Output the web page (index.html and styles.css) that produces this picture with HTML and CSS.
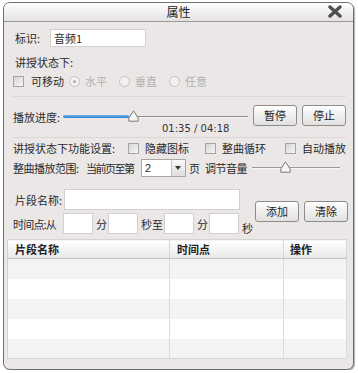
FILE: index.html
```html
<!DOCTYPE html>
<html lang="zh">
<head>
    <meta charset="UTF-8">
    <title>属性</title>
    <link rel="stylesheet" href="styles.css">
</head>
<body>
    <div class="win">
        <div class="title">属性
            <span class="close">
                <svg width="16" height="13" viewBox="0 0 16 13"><path d="M3 2 L13 11 M13 2 L3 11" stroke="#4f4f4f" stroke-width="3.4" stroke-linecap="round"/></svg>
            </span>
        </div>
        <div class="form">
            <div class="row r-id">
                <span class="lbl-id">标识:</span>
                <span class="input in-id">音频1</span>
            </div>
            <div class="row r-head">讲授状态下:</div>
            <div class="row r-move">
                <span class="cb"></span><span class="cb-txt">可移动</span>
                <span class="radio on"></span><span class="dim">水平</span>
                <span class="radio"></span><span class="dim">垂直</span>
                <span class="radio"></span><span class="dim">任意</span>
            </div>
            <div class="sep"></div>
            <div class="row r-play">
                <div class="play-left">
                    <div class="row play-line">
                        <span class="lbl-play">播放进度:</span>
                        <div class="slider">
                            <div class="track"></div>
                            <div class="fill"></div>
                            <svg class="thumb" width="11" height="12" viewBox="0 0 11 12"><path d="M5.5 0.8 L10.2 8 L10.2 11.2 L0.8 11.2 L0.8 8 Z" fill="#f4f4f4" stroke="#7a7a7a"/></svg>
                        </div>
                    </div>
                    <div class="time">01:35 / 04:18</div>
                </div>
                <span class="btn">暂停</span>
                <span class="btn">停止</span>
            </div>
            <div class="sep sep2"></div>
            <div class="row r-func">
                <span class="lbl-func">讲授状态下功能设置:</span>
                <span class="cb"></span><span class="cb-txt t1">隐藏图标</span>
                <span class="cb"></span><span class="cb-txt t2">整曲循环</span>
                <span class="cb"></span><span class="cb-txt">自动播放</span>
            </div>
            <div class="row r-range">
                <span class="lbl-range">整曲播放范围:</span>
                <span class="lbl-page">当前页至第</span>
                <span class="select"><span class="val">2</span><span class="arrow"></span></span>
                <span class="page">页</span>
                <span class="vol-lbl">调节音量</span>
                <div class="slider vol">
                    <div class="track"></div>
                    <svg class="thumb" width="11" height="12" viewBox="0 0 11 12"><path d="M5.5 0.8 L10.2 8 L10.2 11.2 L0.8 11.2 L0.8 8 Z" fill="#f4f4f4" stroke="#7a7a7a"/></svg>
                </div>
            </div>
            <div class="sep sep3"></div>
            <div class="row r-clip">
                <div class="clip-left">
                    <div class="row clip-name">
                        <span class="lbl-clip">片段名称:</span>
                        <span class="input in-name"></span>
                    </div>
                    <div class="row clip-time">
                        <span class="lbl-time">时间点:从</span>
                        <span class="input in-num"></span>
                        <span class="unit">分</span>
                        <span class="input in-num"></span>
                        <span class="unit">秒至</span>
                        <span class="input in-num"></span>
                        <span class="unit">分</span>
                        <span class="input in-num"></span>
                        <span class="unit low">秒</span>
                    </div>
                </div>
                <span class="btn">添加</span>
                <span class="btn">清除</span>
            </div>
        </div>
        <div class="grid-wrap">
            <table class="grid">
                <thead>
                    <tr><th class="c1">片段名称</th><th class="c2">时间点</th><th class="c3">操作</th></tr>
                </thead>
                <tbody>
                    <tr><td></td><td></td><td></td></tr>
                    <tr><td></td><td></td><td></td></tr>
                    <tr><td></td><td></td><td></td></tr>
                    <tr><td></td><td></td><td></td></tr>
                    <tr><td></td><td></td><td></td></tr>
                </tbody>
            </table>
        </div>
    </div>
</body>
</html>
```

FILE: styles.css
```css
* {
    margin: 0;
    padding: 0;
    box-sizing: border-box;
}
body {
    font-family: "Noto Sans CJK SC", "Liberation Sans", sans-serif;
    font-size: 11px;
    color: #2a2a2a;
    background: #fff;
}
.win {
    margin: 2px 0 0 3px;
    width: 351px;
    height: 368px;
    border: 1px solid #6f6f6f;
    border-radius: 7px;
    background: #ebe7e7;
    box-shadow: 1px 1px 1px #b4b0b0;
    overflow: hidden;
}
.title {
    position: relative;
    height: 19px;
    line-height: 18px;
    border-bottom: 1px solid #9c9898;
    background: linear-gradient(#ffffff, #e4e1e1);
    text-align: center;
    font-size: 12px;
    color: #222;
}
.close {
    position: absolute;
    right: 10px;
    top: 2px;
    width: 16px;
    height: 13px;
}
.close svg {
    display: block;
}
.form {
    padding: 0 7px 0 9px;
}
.row {
    display: flex;
    align-items: center;
}
.row > * {
    flex-shrink: 0;
    white-space: nowrap;
}
.input {
    display: block;
    background: #fff;
    border: 1px solid #d2cfcf;
    height: 21px;
}
.r-id {
    margin-top: 6px;
    height: 20px;
    padding-left: 2px;
}
.lbl-id {
    width: 35px;
}
.in-id {
    width: 96px;
    height: 18px;
    line-height: 17px;
    padding-left: 3px;
}
.r-head {
    margin-top: 4px;
    height: 20px;
    padding-left: 2px;
}
.r-move {
    height: 18px;
}
.cb {
    display: block;
    width: 11px;
    height: 11px;
    border: 1px solid #a3a3a3;
    background: linear-gradient(135deg, #d6d6d6, #f7f7f7);
}
.cb-txt {
    margin-left: 7px;
}
.radio {
    display: block;
    position: relative;
    width: 11px;
    height: 11px;
    margin-left: 5px;
    border: 1px solid #c4c2c2;
    border-radius: 50%;
    background: #f2f0f0;
}
.radio.on::after {
    content: "";
    position: absolute;
    left: 3px;
    top: 3px;
    width: 3px;
    height: 3px;
    border-radius: 50%;
    background: #b0aeae;
}
.dim {
    margin-left: 5px;
    margin-right: 7px;
    color: #b3b0b0;
}
.sep {
    height: 1px;
    margin: 6px 0 8px;
    background: #dbd7d7;
}
.r-play {
    height: 29px;
    align-items: flex-start;
}
.play-left {
    width: 235px;
}
.play-line {
    height: 24px;
}
.lbl-play {
    width: 50px;
}
.slider {
    position: relative;
    width: 185px;
    height: 14px;
}
.track {
    position: absolute;
    left: 0;
    right: 0;
    top: 6px;
    height: 2px;
    background: #8d8a8a;
    border-bottom: 1px solid #f6f6f6;
}
.fill {
    position: absolute;
    left: 0;
    top: 5px;
    width: 66px;
    height: 3px;
    border-radius: 2px;
    background: linear-gradient(#6fb6f0, #2b7fd0);
}
.thumb {
    position: absolute;
    left: 65px;
    top: 0;
}
.time {
    margin-top: -6px;
    padding-left: 149px;
    font-family: "DejaVu Sans", sans-serif;
    font-size: 10px;
    line-height: 12px;
    color: #333;
}
.btn {
    display: block;
    width: 44px;
    height: 21px;
    line-height: 19px;
    margin-left: 5px;
    text-align: center;
    border: 1px solid #8e8b8b;
    border-radius: 3px;
    background: linear-gradient(#fefefe, #e2e0e0);
    color: #222;
}
.sep2 {
    margin: 3px 0 2px;
}
.r-func {
    height: 16px;
}
.lbl-func {
    width: 115px;
}
.r-func .cb-txt {
    margin-left: 6px;
}
.r-func .t1 {
    width: 60px;
}
.r-func .t2 {
    width: 63px;
}
.r-range {
    height: 20px;
    margin-top: 2px;
}
.lbl-range {
    width: 73px;
    letter-spacing: -0.5px;
}
.lbl-page {
    width: 55px;
    letter-spacing: -1.5px;
}
.select {
    display: flex;
    width: 45px;
    height: 18px;
    border: 1px solid #a9a6a6;
    background: #fff;
}
.val {
    flex: 1;
    padding-left: 3px;
    line-height: 16px;
    font-family: "Liberation Sans", sans-serif;
}
.arrow {
    position: relative;
    width: 14px;
    border-left: 1px solid #c4c2c2;
    background: linear-gradient(#fafafa, #dedcdc);
}
.arrow::after {
    content: "";
    position: absolute;
    left: 3px;
    top: 6px;
    border-left: 3px solid transparent;
    border-right: 3px solid transparent;
    border-top: 4px solid #333;
}
.page {
    margin-left: 3px;
}
.vol-lbl {
    margin-left: 5px;
    letter-spacing: -0.5px;
}
.slider.vol {
    width: 88px;
    margin-left: 5px;
}
.vol .track {
    background: #9a9797;
}
.vol .thumb {
    left: 28px;
}
.sep3 {
    margin: 5px 0 5px;
    background: transparent;
}
.r-clip {
    height: 45px;
}
.clip-left {
    width: 237px;
}
.clip-name {
    height: 21px;
    padding-left: 2px;
}
.lbl-clip {
    width: 49px;
}
.in-name {
    width: 176px;
}
.clip-time {
    height: 21px;
    margin-top: 3px;
}
.lbl-time {
    width: 50px;
    letter-spacing: -0.8px;
}
.in-num {
    width: 30px;
}
.unit {
    margin: 0 1px 0 3px;
}
.low {
    margin-top: 8px;
}
.grid-wrap {
    padding: 0 5px 0 3px;
    margin-top: 5px;
}
.grid {
    width: 340px;
    border-collapse: collapse;
    background: #fff;
    border: 1px solid #d6d3d3;
}
.grid th {
    height: 19px;
    text-align: left;
    font-weight: bold;
    color: #222;
    padding-left: 7px;
    background: linear-gradient(#ffffff, #e9e8e8);
    border-bottom: 1px solid #c6c4c4;
    border-right: 1px solid #d8d6d6;
}
.grid td {
    height: 20px;
    border-right: 1px solid #dcdada;
}
.grid tbody tr:nth-child(odd) td {
    background: #f3f3f3;
}
.c1 {
    width: 162px;
}
.c2 {
    width: 114px;
}
.grid .c3 {
    padding-left: 6px;
}
```
